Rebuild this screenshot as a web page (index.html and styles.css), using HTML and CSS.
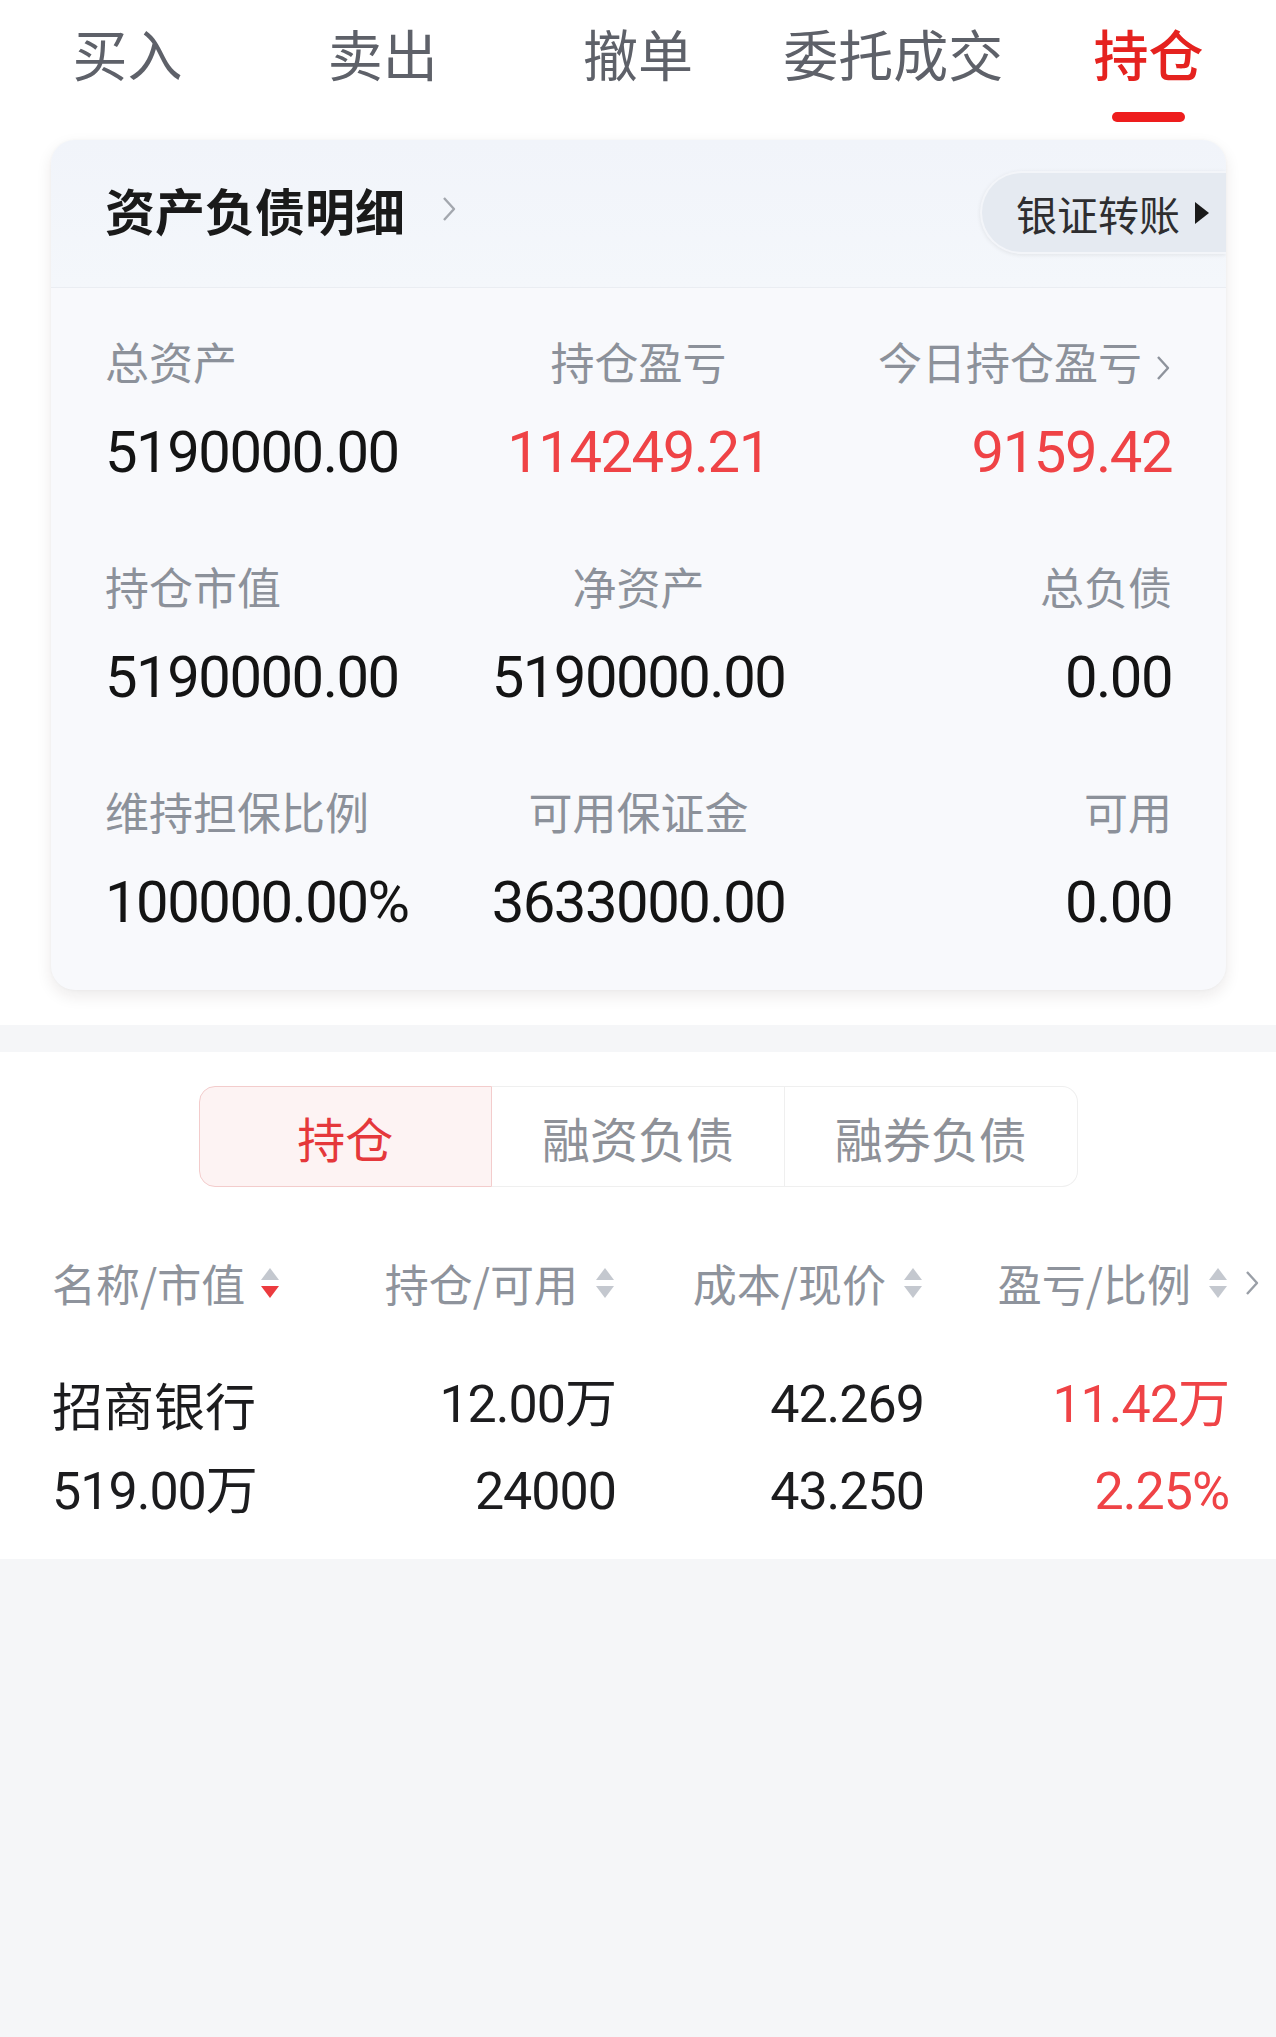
FILE: index.html
```html
<!DOCTYPE html>
<html lang="zh-CN">
<head>
<meta charset="UTF-8">
<title>持仓</title>
<link rel="stylesheet" href="styles.css">
</head>
<body>
    <div class="top">
        <nav class="tabs">
            <div class="tab">买入</div>
            <div class="tab">卖出</div>
            <div class="tab">撤单</div>
            <div class="tab">委托成交</div>
            <div class="tab active">持仓<span class="bar"></span></div>
        </nav>

        <div class="card">
            <div class="card-head">
                <div class="card-title">
                    资产负债明细
                    <svg class="chev" width="16" height="28" viewBox="0 0 16 28"><path d="M3 3 L13 14 L3 25" fill="none" stroke="#a3a7ae" stroke-width="2.4" stroke-linejoin="round"/></svg>
                </div>
                <div class="transfer">
                    银证转账
                    <svg width="16" height="24" viewBox="0 0 16 24"><path d="M1 1 L15 12 L1 23 Z" fill="#1a1a1a"/></svg>
                </div>
            </div>

            <div class="stats">
                <div class="stat">
                    <div class="label">总资产</div>
                    <div class="value">5190000.00</div>
                </div>
                <div class="stat mid">
                    <div class="label">持仓盈亏</div>
                    <div class="value red">114249.21</div>
                </div>
                <div class="stat end">
                    <div class="label">今日持仓盈亏<svg class="chev-sm" width="18" height="32" viewBox="0 0 18 32"><path d="M4 5 L14 16 L4 27" fill="none" stroke="#8e939c" stroke-width="2.4" stroke-linejoin="round"/></svg></div>
                    <div class="value red">9159.42</div>
                </div>

                <div class="stat">
                    <div class="label">持仓市值</div>
                    <div class="value">5190000.00</div>
                </div>
                <div class="stat mid">
                    <div class="label">净资产</div>
                    <div class="value">5190000.00</div>
                </div>
                <div class="stat end">
                    <div class="label">总负债</div>
                    <div class="value">0.00</div>
                </div>

                <div class="stat">
                    <div class="label">维持担保比例</div>
                    <div class="value">100000.00%</div>
                </div>
                <div class="stat mid">
                    <div class="label">可用保证金</div>
                    <div class="value">3633000.00</div>
                </div>
                <div class="stat end">
                    <div class="label">可用</div>
                    <div class="value">0.00</div>
                </div>
            </div>
        </div>
    </div>

    <div class="gap"></div>

    <div class="positions">
        <div class="segment">
            <div class="seg active">持仓</div>
            <div class="seg">融资负债</div>
            <div class="seg">融券负债</div>
        </div>

        <div class="grid head">
            <div class="hcell start">名称/市值
                <svg class="sort" width="22" height="38" viewBox="0 0 22 38"><path d="M11 4 L20 16 L2 16 Z" fill="#c4c8cf"/><path d="M2 22 L20 22 L11 34 Z" fill="#ec3b3f"/></svg>
            </div>
            <div class="hcell">持仓/可用
                <svg class="sort" width="22" height="38" viewBox="0 0 22 38"><path d="M11 4 L20 16 L2 16 Z" fill="#c4c8cf"/><path d="M2 22 L20 22 L11 34 Z" fill="#c4c8cf"/></svg>
            </div>
            <div class="hcell">成本/现价
                <svg class="sort" width="22" height="38" viewBox="0 0 22 38"><path d="M11 4 L20 16 L2 16 Z" fill="#c4c8cf"/><path d="M2 22 L20 22 L11 34 Z" fill="#c4c8cf"/></svg>
            </div>
            <div class="hcell">盈亏/比例
                <svg class="sort" width="22" height="38" viewBox="0 0 22 38"><path d="M11 4 L20 16 L2 16 Z" fill="#c4c8cf"/><path d="M2 22 L20 22 L11 34 Z" fill="#c4c8cf"/></svg>
            </div>
            <div class="hmore">
                <svg width="16" height="30" viewBox="0 0 16 30"><path d="M3 4 L13 15 L3 26" fill="none" stroke="#9a9fa7" stroke-width="2.4" stroke-linejoin="round"/></svg>
            </div>
        </div>

        <div class="grid row">
            <div class="cell name">招商银行</div>
            <div class="cell num">12.00万</div>
            <div class="cell num">42.269</div>
            <div class="cell num red">11.42万</div>
            <div></div>
            <div class="cell num start">519.00万</div>
            <div class="cell num">24000</div>
            <div class="cell num">43.250</div>
            <div class="cell num red">2.25%</div>
            <div></div>
        </div>
    </div>
</body>
</html>
```

FILE: styles.css
```css
body {
    margin: 0;
    background-color: #f5f6f8;
    font-family: "Noto Sans CJK SC", "Noto Sans", sans-serif;
    color: #1c1c1e;
}
.top {
    background-color: #fff;
    padding-bottom: 35px;
}
.tabs {
    display: grid;
    grid-template-columns: repeat(5, 1fr);
    padding-top: 25px;
}
.tab {
    display: flex;
    flex-direction: column;
    align-items: center;
    font-size: 55px;
    line-height: 55px;
    color: #5e6169;
    height: 115px;
}
.tab.active {
    color: #e5221f;
    font-weight: 500;
}
.tab .bar {
    display: block;
    width: 73px;
    height: 10px;
    border-radius: 5px;
    background-color: #ee1d1d;
    margin-top: 32px;
}
.card {
    margin: 0 50px 0 51px;
    background-color: #f8f9fc;
    border-radius: 24px;
    box-shadow: 0 6px 16px rgba(40, 20, 20, 0.09), 0 0 3px rgba(0, 0, 0, 0.04);
    overflow: hidden;
}
.card-head {
    height: 147px;
    display: flex;
    align-items: center;
    justify-content: space-between;
    background: linear-gradient(#f1f4fa, #f4f7fb);
    border-bottom: 1px solid #eaedf2;
}
.card-title {
    display: flex;
    align-items: center;
    padding-left: 54px;
    padding-bottom: 10px;
    font-size: 50px;
    font-weight: 700;
    color: #1a1a1a;
    gap: 36px;
}
.transfer {
    display: flex;
    align-items: center;
    gap: 14px;
    height: 79px;
    padding: 0 16px 0 34px;
    margin-bottom: 2px;
    border: 2px solid #f3f5f9;
    border-right: none;
    border-radius: 42px 0 0 42px;
    background-color: #e5eaf1;
    box-shadow: 0 1px 4px rgba(0, 0, 0, 0.08);
    font-size: 41px;
    color: #2e2e30;
}
.stats {
    display: grid;
    grid-template-columns: repeat(3, 1fr);
    row-gap: 69px;
    padding: 43px 54px 53px;
}
.stat.mid {
    text-align: center;
}
.stat.end {
    text-align: right;
}
.label {
    font-size: 44px;
    line-height: 60px;
    color: #8c919a;
    margin-bottom: 26px;
}
.chev-sm {
    margin-left: 12px;
    vertical-align: -4px;
}
.value {
    font-family: Roboto, "Noto Sans CJK SC", sans-serif;
    font-size: 58px;
    line-height: 70px;
    letter-spacing: -1.5px;
    color: #141414;
}
.red {
    color: #ef4346 !important;
}
.gap {
    height: 27px;
}
.positions {
    background-color: #fff;
    padding: 34px 0 24px;
}
.segment {
    display: flex;
    width: 879px;
    margin: 0 auto;
    height: 101px;
}
.seg {
    flex: 1;
    display: flex;
    align-items: center;
    justify-content: center;
    font-size: 48px;
    color: #8e9198;
    border: 1px solid #efefef;
    border-left: none;
}
.seg:last-child {
    border-radius: 0 16px 16px 0;
}
.seg.active {
    color: #e5383b;
    background-color: #fdf3f3;
    border: 1px solid #f3cccc;
    border-radius: 16px 0 0 16px;
}
.grid {
    display: grid;
    grid-template-columns: 290px 274px 308px 305px 1fr;
    padding-left: 52px;
}
.head {
    margin-top: 64px;
    height: 60px;
}
.hcell {
    display: flex;
    align-items: center;
    justify-content: flex-end;
    gap: 16px;
    font-size: 44px;
    color: #8e939c;
}
.hcell.start {
    justify-content: flex-start;
    gap: 14px;
}
.hmore {
    display: flex;
    align-items: center;
    padding-left: 15px;
}
.row {
    margin-top: 50px;
}
.cell {
    height: 87px;
    line-height: 87px;
    font-size: 51px;
    color: #1c1c1e;
}
.cell.num {
    font-family: Roboto, "Noto Sans CJK SC", sans-serif;
    font-size: 52px;
    letter-spacing: -1px;
    text-align: right;
}
.cell.num.start {
    text-align: left;
}
```
